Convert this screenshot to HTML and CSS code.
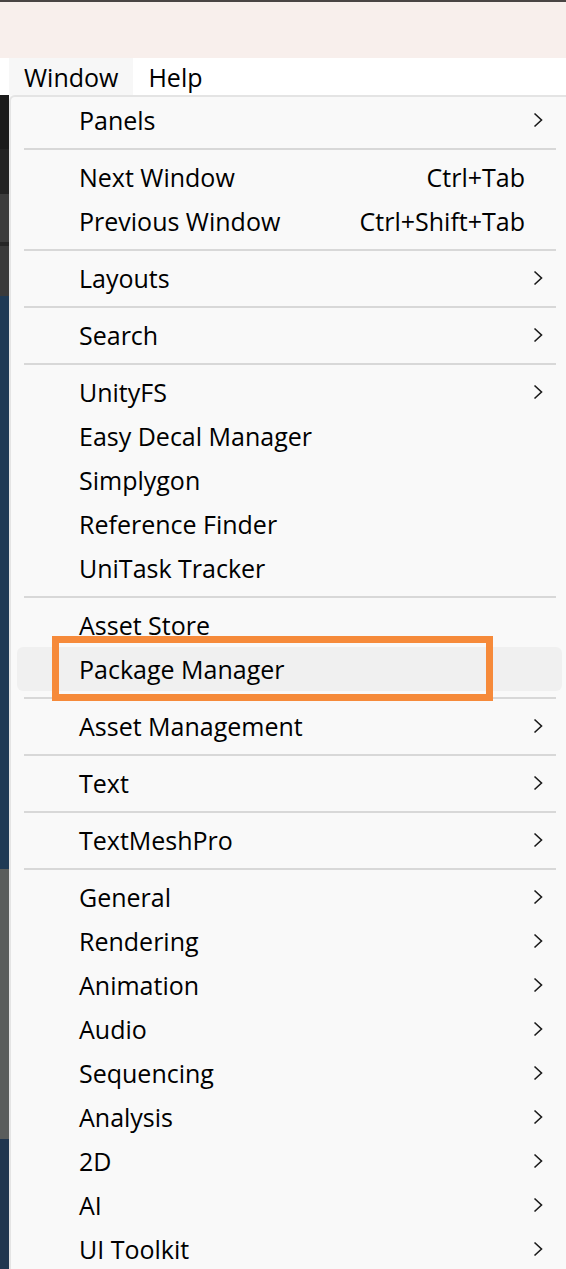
FILE: index.html
```html
<!DOCTYPE html>
<html>
<head>
<meta charset="utf-8">
<link rel="stylesheet" href="styles.css">
</head>
<body>
<div class="screen">
  <div class="topline"></div>
  <div class="titlearea"></div>
  <div class="menubar">
    <div class="mb-item active">Window</div>
    <div class="mb-item">Help</div>
  </div>
  <div class="workspace">
    <div class="editor">
      <div class="ed ed-a"></div>
      <div class="ed ed-b"></div>
      <div class="ed ed-c"></div>
      <div class="ed ed-d"></div>
      <div class="ed ed-e"></div>
      <div class="ed ed-f"></div>
      <div class="ed ed-g"></div>
      <div class="ed ed-h"></div>
    </div>
    <div class="popup">
      <div class="row"><span class="label">Panels</span><svg class="chev" viewBox="0 0 10 16"><path d="M1.5 1.5 L8.5 8 L1.5 14.5"/></svg></div>
      <div class="sep"></div>
      <div class="row"><span class="label">Next Window</span><span class="short">Ctrl+Tab</span></div>
      <div class="row"><span class="label">Previous Window</span><span class="short">Ctrl+Shift+Tab</span></div>
      <div class="sep"></div>
      <div class="row"><span class="label">Layouts</span><svg class="chev" viewBox="0 0 10 16"><path d="M1.5 1.5 L8.5 8 L1.5 14.5"/></svg></div>
      <div class="sep"></div>
      <div class="row"><span class="label">Search</span><svg class="chev" viewBox="0 0 10 16"><path d="M1.5 1.5 L8.5 8 L1.5 14.5"/></svg></div>
      <div class="sep"></div>
      <div class="row"><span class="label">UnityFS</span><svg class="chev" viewBox="0 0 10 16"><path d="M1.5 1.5 L8.5 8 L1.5 14.5"/></svg></div>
      <div class="row"><span class="label">Easy Decal Manager</span></div>
      <div class="row"><span class="label">Simplygon</span></div>
      <div class="row"><span class="label">Reference Finder</span></div>
      <div class="row"><span class="label">UniTask Tracker</span></div>
      <div class="sep"></div>
      <div class="row"><span class="label">Asset Store</span></div>
      <div class="row hover"><span class="label">Package Manager</span><div class="callout"></div></div>
      <div class="sep"></div>
      <div class="row"><span class="label">Asset Management</span><svg class="chev" viewBox="0 0 10 16"><path d="M1.5 1.5 L8.5 8 L1.5 14.5"/></svg></div>
      <div class="sep"></div>
      <div class="row"><span class="label">Text</span><svg class="chev" viewBox="0 0 10 16"><path d="M1.5 1.5 L8.5 8 L1.5 14.5"/></svg></div>
      <div class="sep"></div>
      <div class="row"><span class="label">TextMeshPro</span><svg class="chev" viewBox="0 0 10 16"><path d="M1.5 1.5 L8.5 8 L1.5 14.5"/></svg></div>
      <div class="sep"></div>
      <div class="row"><span class="label">General</span><svg class="chev" viewBox="0 0 10 16"><path d="M1.5 1.5 L8.5 8 L1.5 14.5"/></svg></div>
      <div class="row"><span class="label">Rendering</span><svg class="chev" viewBox="0 0 10 16"><path d="M1.5 1.5 L8.5 8 L1.5 14.5"/></svg></div>
      <div class="row"><span class="label">Animation</span><svg class="chev" viewBox="0 0 10 16"><path d="M1.5 1.5 L8.5 8 L1.5 14.5"/></svg></div>
      <div class="row"><span class="label">Audio</span><svg class="chev" viewBox="0 0 10 16"><path d="M1.5 1.5 L8.5 8 L1.5 14.5"/></svg></div>
      <div class="row"><span class="label">Sequencing</span><svg class="chev" viewBox="0 0 10 16"><path d="M1.5 1.5 L8.5 8 L1.5 14.5"/></svg></div>
      <div class="row"><span class="label">Analysis</span><svg class="chev" viewBox="0 0 10 16"><path d="M1.5 1.5 L8.5 8 L1.5 14.5"/></svg></div>
      <div class="row"><span class="label">2D</span><svg class="chev" viewBox="0 0 10 16"><path d="M1.5 1.5 L8.5 8 L1.5 14.5"/></svg></div>
      <div class="row"><span class="label">AI</span><svg class="chev" viewBox="0 0 10 16"><path d="M1.5 1.5 L8.5 8 L1.5 14.5"/></svg></div>
      <div class="row"><span class="label">UI Toolkit</span><svg class="chev" viewBox="0 0 10 16"><path d="M1.5 1.5 L8.5 8 L1.5 14.5"/></svg></div>
    </div>
  </div>
</div>
</body>
</html>
```

FILE: styles.css
```css
html, body {
  margin: 0;
  padding: 0;
  background: #f9f9f9;
}
.screen {
  width: 566px;
  height: 1269px;
  overflow: hidden;
  font-family: "Open Sans", "Noto Sans", sans-serif;
  font-size: 25px;
  color: #000;
}
.topline {
  height: 2px;
  background: #4a4544;
}
.titlearea {
  height: 56px;
  background: #f8efec;
}
.menubar {
  height: 37px;
  background: #ffffff;
  display: flex;
  align-items: stretch;
}
.mb-item {
  display: flex;
  align-items: center;
  padding: 1px 15px 0 15px;
  line-height: 1;
}
.mb-item.active {
  margin-left: 9px;
  background: #f7f7f7;
  padding: 1px 15px 0 15px;
}
.workspace {
  display: flex;
  height: 1180px;
}
.editor {
  width: 9px;
  display: flex;
  flex-direction: column;
  flex-shrink: 0;
}
.ed-a { height: 54px; background: #1b1b1b; }
.ed-b { height: 45px; background: #232323; }
.ed-c { height: 48px; background: #3c3c3c; }
.ed-d { height: 4px; background: #262626; }
.ed-e { height: 50px; background: #3a3a3a; }
.ed-f { height: 573px; background: #1f3a55; }
.ed-g { height: 270px; background: #5a5d5c; }
.ed-h { flex: 1; background: #20364f; }
.popup {
  flex: 1;
  background: #f9f9f9;
  border-left: 2px solid #e4e4e4;
  border-top: 2px solid #e4e4e4;
  border-top-left-radius: 6px;
  padding-top: 1px;
  display: flex;
  flex-direction: column;
}
.row {
  position: relative;
  height: 44px;
  flex-shrink: 0;
  display: flex;
  align-items: center;
  padding: 0 23px 0 68px;
}
.label {
  flex: 1;
  white-space: nowrap;
  line-height: 1;
  padding-top: 1px;
}
.short {
  padding-right: 18px;
  white-space: nowrap;
  line-height: 1;
  padding-top: 1px;
}
.chev {
  width: 10px;
  height: 16px;
  fill: none;
  stroke: #1a1a1a;
  stroke-width: 1.6;
}
.sep {
  height: 2px;
  flex-shrink: 0;
  margin: 6px 10px 5px 13px;
  background: #d8d8d8;
}
.row.hover {
  margin: 0 4px 0 6px;
  padding-left: 62px;
  background: #f0f0f0;
  border-radius: 6px;
}
.callout {
  position: absolute;
  left: 35px;
  top: -11px;
  width: 427px;
  height: 51px;
  border: 7px solid #f68a3a;
}
```
